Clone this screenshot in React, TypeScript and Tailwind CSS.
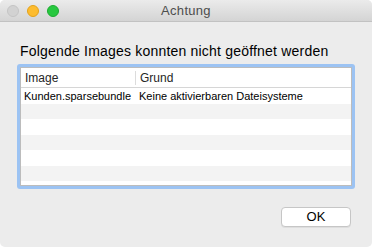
export default function App() {
  const rows = [
    { image: "Kunden.sparsebundle", grund: "Keine aktivierbaren Dateisysteme" },
    null,
    null,
    null,
    null,
    null,
    null,
  ];
  return (
    <div
      className="w-[372px] h-[247px] bg-[#ececec] rounded-[5px] overflow-hidden flex flex-col text-[#222]"
      style={{ fontFamily: '"Liberation Sans", Arial, sans-serif' }}
    >
      <div className="h-[22px] shrink-0 relative flex items-center justify-center bg-gradient-to-b from-[#ebebeb] to-[#d4d4d4] border-b border-[#c2c2c2]">
        <div className="absolute left-[7px] top-[5px] flex gap-[8px]">
          <span className="w-[12px] h-[12px] rounded-full bg-[#d2d2d2] border border-[#c4c4c4]" />
          <span className="w-[12px] h-[12px] rounded-full bg-[#fdbc2f] border border-[#e3a21b]" />
          <span className="w-[12px] h-[12px] rounded-full bg-[#28c840] border border-[#1eab31]" />
        </div>
        <span className="text-[13px] text-[#4d4d4d] tracking-[0.3px]">Achtung</span>
      </div>

      <div className="pl-[20px] pt-[21px] text-[14px] leading-[16px] text-black tracking-[0.2px]">
        Folgende Images konnten nicht geöffnet werden
      </div>

      <div className="ml-[17px] mt-[5px] w-[338px] h-[125px] bg-[#9cc3f3] rounded-[3px] p-[3px]">
        <div className="w-full h-full bg-white border border-[#bcbcbc] overflow-hidden">
          <div className="h-[20px] flex items-center text-[12px] text-[#262626] border-b border-[#d6d6d6]">
            <div className="w-[114px] pl-[4px]">Image</div>
            <div className="w-px h-[14px] bg-[#dcdcdc]" />
            <div className="pl-[4px]">Grund</div>
          </div>
          {rows.map((r, i) => (
            <div
              key={i}
              className={
                "h-[15.5px] flex items-center text-[11px] text-black " +
                (i % 2 === 1 ? "bg-[#f3f3f3]" : "bg-white")
              }
            >
              <div className="w-[115px] pl-[3px] whitespace-nowrap">{r?.image}</div>
              <div className="pl-[3px] whitespace-nowrap">{r?.grund}</div>
            </div>
          ))}
        </div>
      </div>

      <div className="flex justify-end pr-[21px] mt-[18px]">
        <button className="w-[70px] h-[20px] bg-white border border-[#c6c6c6] rounded-[4px] shadow-[0_1px_0_rgba(0,0,0,0.06)] text-[13px] text-black flex items-center justify-center">
          OK
        </button>
      </div>
    </div>
  );
}
